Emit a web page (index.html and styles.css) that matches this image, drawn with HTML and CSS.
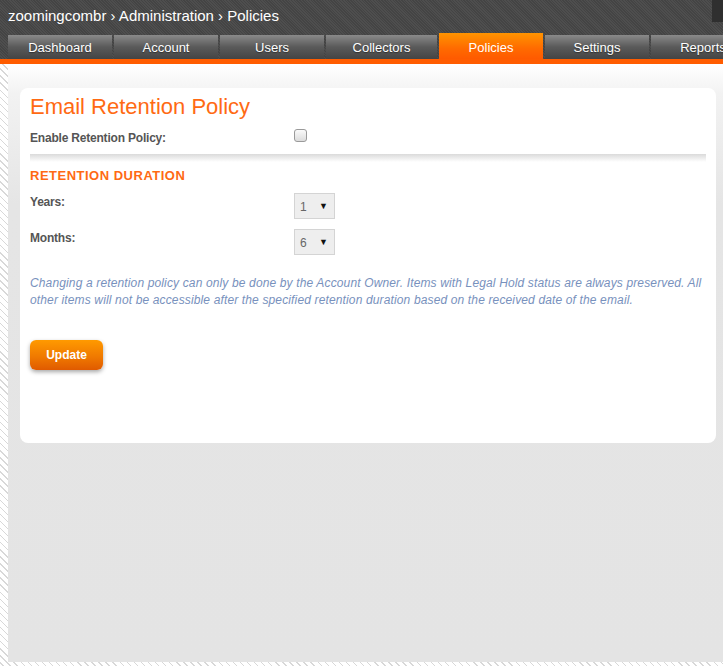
FILE: index.html
```html
<!DOCTYPE html>
<html>
<head>
<meta charset="utf-8">
<link rel="stylesheet" href="styles.css">
</head>
<body>
<div class="header">
  <div class="crumbs">zoomingcombr › Administration › Policies</div>
  <div class="corner"></div>
  <nav class="tabs">
    <a class="tab">Dashboard</a>
    <a class="tab">Account</a>
    <a class="tab">Users</a>
    <a class="tab tab-wide">Collectors</a>
    <a class="tab active">Policies</a>
    <a class="tab">Settings</a>
    <a class="tab">Reports</a>
  </nav>
</div>
<div class="orange-bar"></div>
<div class="main">
  <div class="card">
    <h1 class="title">Email Retention Policy</h1>
    <div class="row row-enable">
      <label class="label">Enable Retention Policy:</label>
      <span class="checkbox"></span>
    </div>
    <div class="divider"></div>
    <h2 class="section">RETENTION DURATION</h2>
    <div class="row row-select">
      <label class="label">Years:</label>
      <span class="select"><span class="val">1</span><span class="arrow">▼</span></span>
    </div>
    <div class="row row-select">
      <label class="label">Months:</label>
      <span class="select"><span class="val">6</span><span class="arrow">▼</span></span>
    </div>
    <p class="note">Changing a retention policy can only be done by the Account Owner. Items with Legal Hold status are always preserved. All other items will not be accessible after the specified retention duration based on the received date of the email.</p>
    <button class="btn">Update</button>
  </div>
</div>
</body>
</html>
```

FILE: styles.css
```css
html, body {
  margin: 0;
  padding: 0;
}
body {
  width: 723px;
  height: 666px;
  overflow: hidden;
  font-family: "Liberation Sans", Arial, sans-serif;
  background: repeating-linear-gradient(45deg, #ffffff 0px, #ffffff 2px, #d8d8d8 2px, #d8d8d8 3px, #ffffff 3px, #ffffff 5px);
}
.header {
  position: relative;
  height: 59px;
  background: repeating-linear-gradient(45deg, #4e4e4e 0px, #4e4e4e 1px, #444444 1px, #444444 2px);
  display: flex;
  flex-direction: column;
}
.crumbs {
  color: #ffffff;
  font-size: 15px;
  line-height: 20px;
  padding: 6px 0 0 8px;
  height: 27px;
  box-sizing: border-box;
  white-space: nowrap;
}
.corner {
  position: absolute;
  right: 0;
  top: 0;
  width: 11px;
  height: 22px;
  background: #2f2f2f;
}
.tabs {
  display: flex;
  gap: 2px;
  padding: 6px 0 0 8px;
  align-items: flex-end;
  height: 32px;
  box-sizing: border-box;
  white-space: nowrap;
}
.tab {
  flex: 0 0 auto;
  width: 104px;
  height: 24px;
  line-height: 26px;
  text-align: center;
  color: #ffffff;
  font-size: 13px;
  background: linear-gradient(#8a8a8a, #5a5a5a 50%, #444444);
  text-shadow: 0 1px 1px rgba(0,0,0,0.4);
}
.tab-wide {
  width: 111px;
}
.tab.active {
  height: 26px;
  line-height: 30px;
  background: linear-gradient(#ff9400, #ff6a00 60%, #ff5a00);
  text-shadow: none;
}
.orange-bar {
  height: 5px;
  background: #ff5c00;
}
.main {
  margin-left: 8px;
  height: 598px;
  box-sizing: border-box;
  padding: 24px 7px 0 12px;
  background: linear-gradient(#ffffff 0px, #f2f2f2 30px, #e5e5e5 140px, #e4e4e4);
}
.card {
  background: #ffffff;
  border-radius: 8px;
  height: 355px;
  box-sizing: border-box;
  padding: 5px 10px 0 10px;
}
.title {
  margin: 0;
  font-weight: normal;
  font-size: 22px;
  line-height: 28px;
  color: #ff6a13;
}
.row {
  display: flex;
  align-items: center;
}
.label {
  width: 264px;
  flex: 0 0 264px;
  font-size: 12px;
  font-weight: bold;
  color: #555555;
  letter-spacing: -0.2px;
}
.row-enable {
  height: 22px;
  margin-top: 4px;
}
.row-enable .label {
  padding-top: 4px;
}
.checkbox {
  width: 11px;
  height: 11px;
  border: 1px solid #9a9a9a;
  border-radius: 3px;
  background: linear-gradient(#fafafa, #dcdcdc);
  margin-top: -2px;
}
.divider {
  height: 8px;
  margin-top: 7px;
  background: linear-gradient(#dadada, #ffffff);
}
.section {
  margin: 6px 0 0 0;
  font-size: 13px;
  line-height: 16px;
  font-weight: bold;
  color: #ff6a13;
  letter-spacing: 0.5px;
}
.row-select {
  align-items: flex-start;
  height: 26px;
  margin-top: 9px;
}
.row-select + .row-select {
  margin-top: 10px;
}
.row-select .label {
  padding-top: 2px;
}
.select {
  width: 41px;
  height: 26px;
  box-sizing: border-box;
  border: 1px solid #d4d4d4;
  background: #eeeeee;
  display: flex;
  align-items: center;
  justify-content: space-between;
  padding: 0 6px 0 5px;
  font-size: 12px;
  color: #666666;
}
.select .val {
  padding-top: 1px;
}
.select .arrow {
  font-size: 9px;
  color: #111111;
}
.note {
  margin: 20px 0 0 0;
  font-size: 12px;
  line-height: 17px;
  font-style: italic;
  color: #7891bd;
  letter-spacing: 0.14px;
}
.btn {
  margin-top: 31px;
  width: 73px;
  height: 30px;
  border: none;
  border-radius: 6px;
  background: linear-gradient(#ff9a00, #f07a00 55%, #e05a00);
  color: #ffffff;
  font-family: "Liberation Sans", Arial, sans-serif;
  font-size: 12px;
  font-weight: bold;
  box-shadow: 0 2px 4px rgba(0,0,0,0.35);
  padding: 0;
}
```
